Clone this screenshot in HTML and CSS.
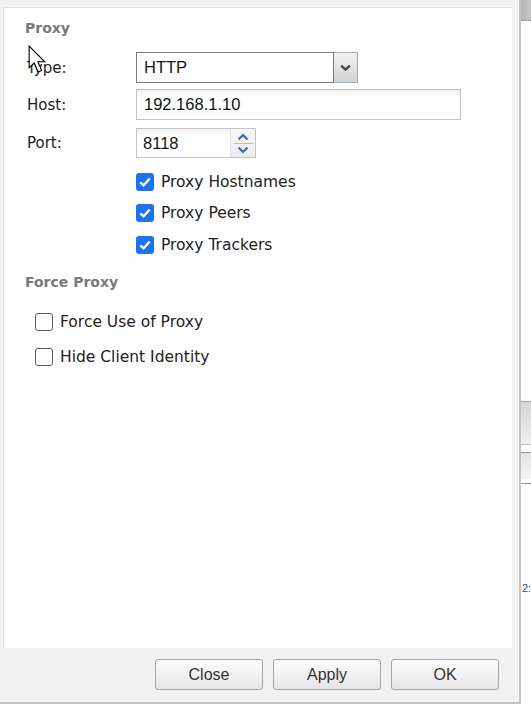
FILE: index.html
```html
<!DOCTYPE html>
<html lang="en">
<head>
<meta charset="utf-8">
<title>Preferences - Proxy</title>
<link rel="stylesheet" href="styles.css">
</head>
<body>
<div class="screen">
  <div class="dialog">
    <div class="panel">
      <div class="section-title">Proxy</div>

      <div class="field-row row-type">
        <span class="field-label">Type:</span>
        <div class="select">
          <span class="select-value">HTTP</span>
          <span class="select-arrow">
            <svg width="11" height="8" viewBox="0 0 11 8"><path d="M1.2 1.6 L5.5 5.6 L9.8 1.6" fill="none" stroke="#474747" stroke-width="2.4"/></svg>
          </span>
        </div>
      </div>

      <div class="field-row row-host">
        <span class="field-label">Host:</span>
        <div class="text-input host-input">192.168.1.10</div>
      </div>

      <div class="field-row row-port">
        <span class="field-label">Port:</span>
        <div class="spinner">
          <span class="spinner-value">8118</span>
          <span class="spinner-buttons">
            <svg width="12" height="8" viewBox="0 0 12 8"><path d="M1.5 6.5 L6 2 L10.5 6.5" fill="none" stroke="#3a6bb4" stroke-width="2.2"/></svg>
            <span class="spinner-sep"></span>
            <svg width="12" height="8" viewBox="0 0 12 8"><path d="M1.5 1.5 L6 6 L10.5 1.5" fill="none" stroke="#3a6bb4" stroke-width="2.2"/></svg>
          </span>
        </div>
      </div>

      <div class="check-list proxy-checks">
        <label class="check-row"><span class="checkbox checked"><svg width="18" height="18" viewBox="0 0 18 18"><path d="M4.3 9.3 L7.6 12.4 L13.7 5.6" fill="none" stroke="#fff" stroke-width="2.3"/></svg></span>Proxy Hostnames</label>
        <label class="check-row"><span class="checkbox checked"><svg width="18" height="18" viewBox="0 0 18 18"><path d="M4.3 9.3 L7.6 12.4 L13.7 5.6" fill="none" stroke="#fff" stroke-width="2.3"/></svg></span>Proxy Peers</label>
        <label class="check-row"><span class="checkbox checked"><svg width="18" height="18" viewBox="0 0 18 18"><path d="M4.3 9.3 L7.6 12.4 L13.7 5.6" fill="none" stroke="#fff" stroke-width="2.3"/></svg></span>Proxy Trackers</label>
      </div>

      <div class="section-title force-title">Force Proxy</div>

      <div class="check-list force-checks">
        <label class="check-row tall"><span class="checkbox"></span>Force Use of Proxy</label>
        <label class="check-row tall"><span class="checkbox"></span>Hide Client Identity</label>
      </div>
    </div>

    <div class="footer">
      <button class="btn">Close</button>
      <button class="btn">Apply</button>
      <button class="btn">OK</button>
    </div>
  </div>

  <div class="backdrop">
    <div class="bd-tab"></div>
    <div class="bd-block bd-block-a"></div>
    <div class="bd-line"></div>
    <div class="bd-block bd-block-b"></div>
    <div class="bd-line bd-line-b"></div>
    <div class="bd-text">2:</div>
  </div>

  <svg class="cursor" width="19" height="30" viewBox="0 0 17 27">
    <path d="M1 1 L1 20.5 L5.6 16.2 L9 24.3 L12.2 22.9 L8.9 15.1 L15 15.1 Z" fill="#fff" stroke="#000" stroke-width="1" stroke-linejoin="miter"/>
  </svg>
</div>
</body>
</html>
```

FILE: styles.css
```css
* {
  box-sizing: border-box;
}

html, body {
  margin: 0;
  padding: 0;
  background: #ffffff;
}

body {
  font-family: "DejaVu Sans", Verdana, sans-serif;
  color: #222;
}

.screen {
  position: relative;
  display: grid;
  grid-template-columns: 521px 10px;
  width: 531px;
  height: 707px;
  overflow: hidden;
}

/* dialog frame */
.dialog {
  display: flex;
  flex-direction: column;
  height: 704px;
  background: #f1f1f1;
  border-right: 2px solid #c4c4c4;
  border-bottom: 2px solid #c4c4c4;
  padding-left: 3px;
}

.panel {
  margin-top: 7px;
  width: 509px;
  height: 641px;
  background: #ffffff;
  border-left: 1px solid #e2e2e2;
  border-top: 1px solid #e2e2e2;
  padding-top: 11px;
}

.section-title {
  margin-left: 21px;
  height: 18px;
  line-height: 18px;
  font-size: 14px;
  font-weight: bold;
  color: #7a7a7a;
}

.field-row {
  display: flex;
  align-items: center;
  padding-left: 23px;
  font-size: 15px;
  color: #222;
}

.field-label {
  width: 109px;
}

.row-type {
  margin-top: 15px;
  height: 31px;
}

.row-host {
  margin-top: 6px;
  height: 31px;
}

.row-port {
  margin-top: 8px;
  height: 30px;
}

/* dropdown */
.select {
  display: flex;
  height: 31px;
  width: 222px;
  font-family: "Liberation Sans", Arial, sans-serif;
  font-size: 16.5px;
  color: #111;
}

.select-value {
  flex: 1;
  display: flex;
  align-items: center;
  padding-left: 7px;
  border: 1px solid #7b7b7b;
  background: #fff;
}

.select-arrow {
  width: 24px;
  display: flex;
  align-items: center;
  justify-content: center;
  border: 1px solid #a9a9a9;
  border-left: none;
  border-bottom: 1px solid #8fb6e0;
  background: linear-gradient(#f3f3f3, #d2d2d2);
}

/* text inputs */
.text-input {
  display: flex;
  align-items: center;
  height: 31px;
  padding-left: 7px;
  border: 1px solid #c3c3c3;
  background: linear-gradient(#efefef 0, #ffffff 6px);
  font-family: "Liberation Sans", Arial, sans-serif;
  font-size: 16.5px;
  color: #111;
}

.host-input {
  width: 325px;
}

.spinner {
  display: flex;
  width: 120px;
  height: 30px;
  border: 1px solid #c3c3c3;
  background: linear-gradient(#efefef 0, #ffffff 6px);
  font-family: "Liberation Sans", Arial, sans-serif;
  font-size: 16.5px;
  color: #111;
}

.spinner-value {
  flex: 1;
  display: flex;
  align-items: center;
  padding-left: 6px;
}

.spinner-buttons {
  width: 25px;
  display: flex;
  flex-direction: column;
  align-items: center;
  justify-content: center;
  gap: 2px;
  border-left: 1px solid #e4e4e4;
  background: linear-gradient(#f7f7f7, #ececec);
}

.spinner-sep {
  width: 19px;
  height: 1px;
  background: #c9bea0;
}

/* checkboxes */
.check-list {
  display: flex;
  flex-direction: column;
}

.proxy-checks {
  margin-top: 8px;
  padding-left: 132px;
}

.force-checks {
  margin-top: 14px;
  padding-left: 31px;
}

.force-title {
  margin-top: 12px;
}

.check-row {
  display: flex;
  align-items: center;
  gap: 7px;
  height: 31.5px;
  font-size: 15.5px;
  color: #222;
}

.check-row.tall {
  height: 35px;
}

.checkbox {
  width: 18px;
  height: 18px;
  border-radius: 3px;
  border: 1px solid #5c5c5c;
  background: #fff;
  display: flex;
}

.checkbox.checked {
  border: none;
  background: #1d74eb;
}

/* footer buttons */
.footer {
  display: flex;
  justify-content: flex-end;
  gap: 10px;
  padding: 11px 20px 0 0;
}

.btn {
  width: 108px;
  height: 31px;
  padding: 0;
  border: 1px solid #a5a5a5;
  border-radius: 3px;
  background: linear-gradient(#fdfdfd, #e6e6e6);
  font-family: "Liberation Sans", Arial, sans-serif;
  font-size: 16px;
  color: #333;
}

/* page content visible behind the dialog */
.backdrop {
  display: flex;
  flex-direction: column;
  background: #fff;
}

.bd-tab {
  height: 21px;
  background: linear-gradient(90deg, #b4b4b4, #c8c8c8);
  border-bottom: 1px dotted #8a8a8a;
}

.bd-block {
  background: linear-gradient(#d6d6d6, #f0f0f0);
  border-top: 1px solid #a8a8a8;
}

.bd-block-a {
  margin-top: 380px;
  height: 44px;
  border-bottom: 1px solid #c0c0c0;
}

.bd-line {
  height: 1px;
  margin-top: 7px;
  background: #909090;
}

.bd-block-b {
  height: 26px;
  border-top: none;
  background: linear-gradient(#e6e6e6, #f4f4f4);
}

.bd-line-b {
  margin-top: 4px;
}

.bd-text {
  margin-top: 98px;
  padding-left: 1px;
  font-family: "Liberation Sans", Arial, sans-serif;
  font-size: 11px;
  color: #1a4e8c;
  white-space: nowrap;
}

.cursor {
  position: absolute;
  left: 28px;
  top: 45px;
}
```
